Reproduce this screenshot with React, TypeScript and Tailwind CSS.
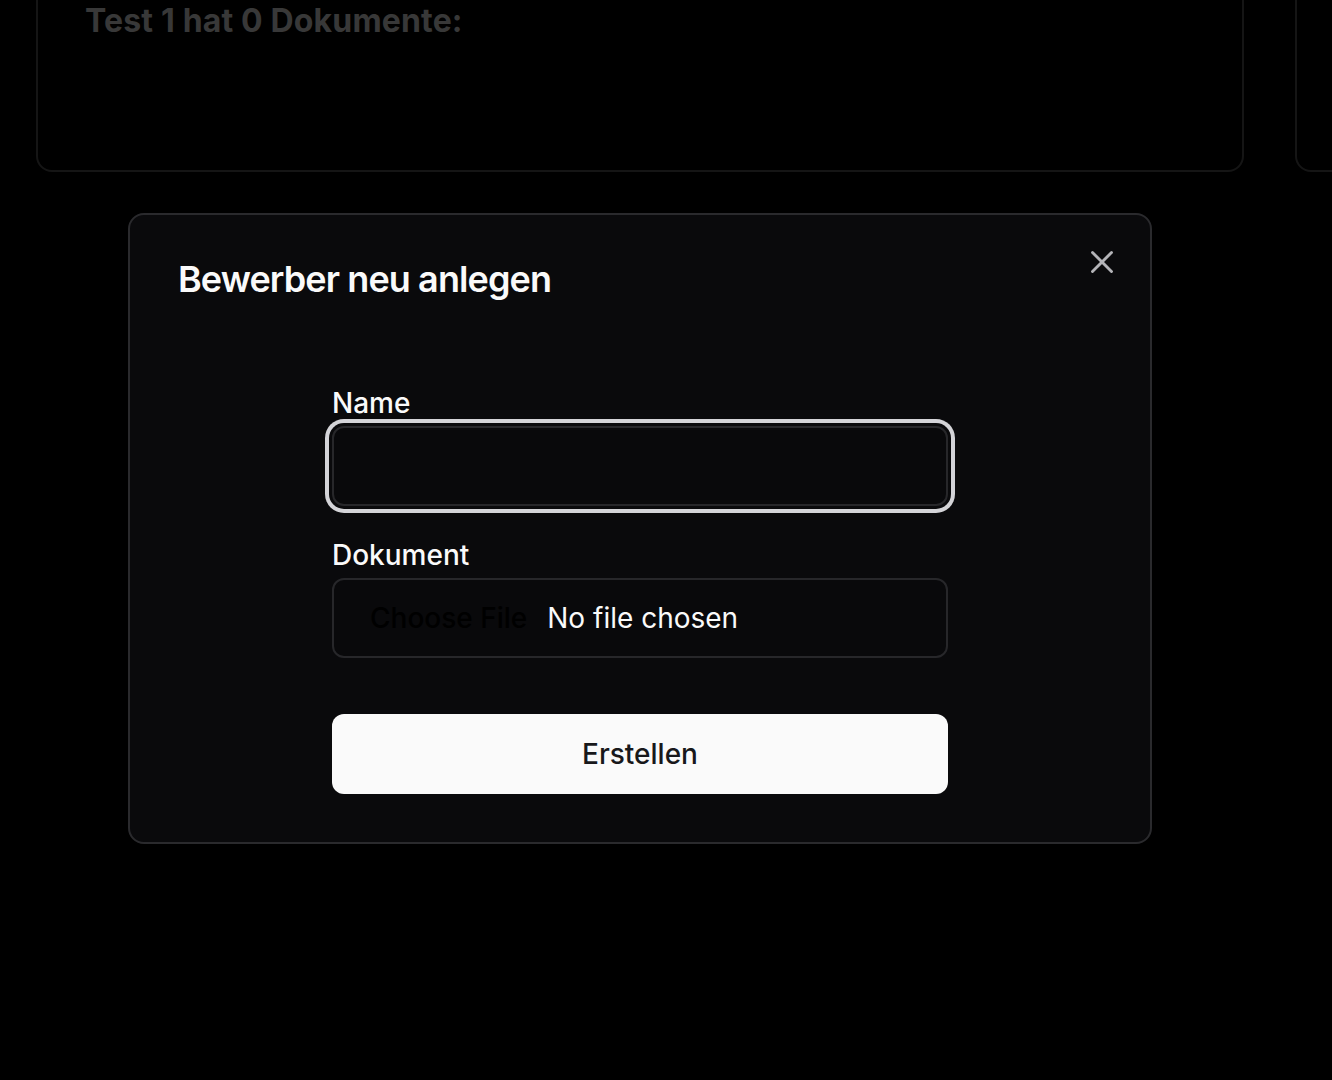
import React from 'react';
import { X } from 'lucide-react';

const font = { fontFamily: 'Inter, "Noto Sans", sans-serif' };

const App: React.FC = () => {
  return (
    <div className="relative h-screen w-full overflow-hidden bg-black" style={font}>
      {/* page behind the dialog (already dimmed by the overlay) */}
      <div className="-mt-[100px] flex gap-[51px] pl-[36px]">
        <div className="h-[272px] w-[1208px] shrink-0 rounded-[16px] border-2 border-[#151515] pl-[47px] pt-[103px]">
          <h2 className="text-[32px] font-bold leading-[32px] tracking-[0.005em] text-[#383838]">
            Test 1 hat 0 Dokumente:
          </h2>
        </div>
        <div className="h-[272px] w-[400px] shrink-0 rounded-[16px] border-2 border-[#151515]" />
      </div>

      {/* dialog */}
      <div className="absolute left-[128px] top-[213px] w-[1024px] rounded-[16px] border-2 border-[#2a2a2d] bg-[#0a0a0c] p-[48px]">
        <button className="absolute right-[29px] top-[28px] text-[#b4b4b8]">
          <X size={38} strokeWidth={1.8} />
        </button>
        <h1 className="text-[36px] font-semibold leading-[32px] tracking-tight text-[#fafafa]">
          Bewerber neu anlegen
        </h1>

        <div className="mx-auto mt-[94px] flex w-[616px] flex-col">
          <label className="text-[28px] font-medium leading-[28px] text-[#fafafa]">Name</label>
          <div className="mt-[9px] h-[80px] w-full rounded-[12px] border-2 border-[#27272a] bg-[#09090b] ring-4 ring-[#d4d4d8] ring-offset-3 ring-offset-[#0a0a0c]" />

          <label className="mt-[35px] text-[28px] font-medium leading-[28px] text-[#fafafa]">Dokument</label>
          <div className="mt-[9px] flex h-[80px] w-full items-center rounded-[12px] border-2 border-[#27272a] bg-[#09090b] pl-[36px]">
            <span className="text-[28px] font-medium leading-[28px] text-black">Choose File</span>
            <span className="ml-[20px] text-[28px] leading-[28px] text-[#fafafa]">No file chosen</span>
          </div>

          <button className="mt-[56px] flex h-[80px] w-full items-center justify-center rounded-[12px] bg-[#fafafa] text-[28px] font-medium text-[#18181b]">
            Erstellen
          </button>
        </div>
      </div>
    </div>
  );
};

export default App;
